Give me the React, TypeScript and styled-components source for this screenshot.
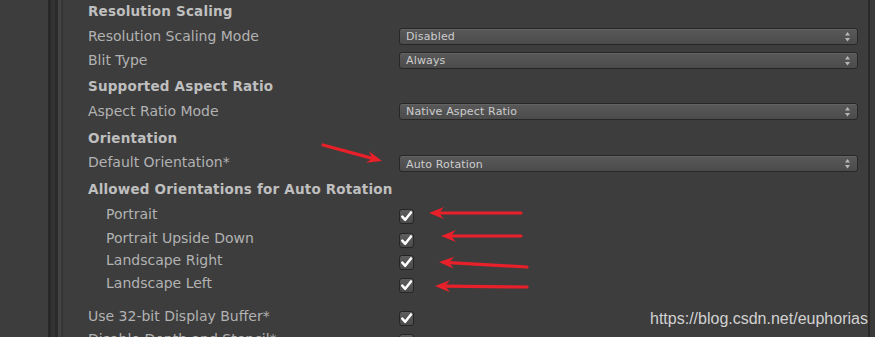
import React from 'react';
import styled, { createGlobalStyle } from 'styled-components';

const Global = createGlobalStyle`
  html, body { margin: 0; padding: 0; background: #3d3d3d; }
  body { width: 875px; height: 337px; overflow: hidden; font-family: "DejaVu Sans", "Liberation Sans", sans-serif; }
`;

const Frame = styled.div`
  position: relative;
  display: flex;
  width: 875px;
  height: 337px;
  overflow: hidden;
  background: #3d3d3d;
`;

const Gutter = styled.div`
  width: 63px;
  flex: none;
  background: linear-gradient(
    to right,
    #3d3d3d 0 48px,
    #282828 48px 51px,
    #323232 51px 55px,
    #2b2b2b 55px 58px,
    #444444 58px 61px,
    #363636 61px 63px
  );
`;

const Panel = styled.div`
  flex: 1;
  display: flex;
  flex-direction: column;
  padding-left: 25px;
`;

const Divider = styled.div`
  width: 2px;
  flex: none;
  background: #2a2a2a;
`;

const RightEdge = styled.div`
  width: 5px;
  flex: none;
  background: #3a3a3a;
`;

const Row = styled.div<{ $mt: number }>`
  display: grid;
  grid-template-columns: 311px 459px;
  align-items: center;
  height: 22px;
  flex: none;
  margin-top: ${(p) => p.$mt}px;
`;

const Header = styled.div`
  grid-column: 1 / -1;
  font-size: 13.5px;
  letter-spacing: 0.2px;
  font-weight: bold;
  color: #bfbfbf;
  white-space: nowrap;
`;

const Label = styled.div<{ $indent?: boolean }>`
  font-size: 14px;
  color: #b2b2b2;
  white-space: nowrap;
  padding-left: ${(p) => (p.$indent ? 18 : 0)}px;
`;

const Select = styled.div<{ $shift?: number }>`
  height: 17px;
  box-sizing: border-box;
  border: 1px solid #272727;
  border-radius: 3px;
  background: linear-gradient(#595959, #4b4b4b);
  box-shadow: inset 0 1px 0 rgba(255, 255, 255, 0.07);
  display: flex;
  align-items: center;
  justify-content: space-between;
  padding: 1px 7px 0 6px;
  font-size: 11px;
  letter-spacing: 0.15px;
  color: #cdcdcd;
  margin-top: ${(p) => p.$shift ?? 0}px;
`;

const Check = styled.div`
  width: 15px;
  height: 15px;
  box-sizing: border-box;
  border: 1px solid #262626;
  border-radius: 3px;
  background: linear-gradient(#5e5e5e, #4b4b4b);
  margin-top: 5px;
  display: flex;
  align-items: center;
  justify-content: center;
`;

const Overlay = styled.svg`
  position: absolute;
  left: 0;
  top: 0;
  pointer-events: none;
`;

const Watermark = styled.div`
  position: absolute;
  left: 650px;
  top: 310px;
  font-family: "Liberation Sans", Arial, sans-serif;
  font-size: 16px;
  color: #d2d2d2;
  white-space: nowrap;
`;

const Arrows = () => (
  <svg width="5" height="10" viewBox="0 0 5 10">
    <polygon points="2.5,0 5,3.5 0,3.5" fill="#b8b8b8" />
    <polygon points="0,6 5,6 2.5,9.5" fill="#b8b8b8" />
  </svg>
);

const Tick = () => (
  <svg width="13" height="13" viewBox="0 0 13 13">
    <path d="M2.3 6.6 L5.2 9.8 L11 2.4" stroke="#ffffff" strokeWidth="2.5" fill="none" strokeLinecap="round" strokeLinejoin="round" />
  </svg>
);

const Dropdown: React.FC<{ value: string; shift?: number }> = ({ value, shift }) => (
  <Select $shift={shift}>
    <span>{value}</span>
    <Arrows />
  </Select>
);

type ArrowDef = { x1: number; y1: number; x2: number; y2: number };

const RedArrow: React.FC<ArrowDef> = ({ x1, y1, x2, y2 }) => {
  const ang = Math.atan2(y2 - y1, x2 - x1);
  const len = 15;
  const half = 6;
  const bx = x2 - Math.cos(ang) * len;
  const by = y2 - Math.sin(ang) * len;
  const nx = -Math.sin(ang);
  const ny = Math.cos(ang);
  const notchX = x2 - Math.cos(ang) * (len - 5);
  const notchY = y2 - Math.sin(ang) * (len - 5);
  const pts = [
    `${x2},${y2}`,
    `${bx + nx * half},${by + ny * half}`,
    `${notchX},${notchY}`,
    `${bx - nx * half},${by - ny * half}`,
  ].join(' ');
  return (
    <g>
      <line x1={x1} y1={y1} x2={notchX} y2={notchY} stroke="#e8202a" strokeWidth="3.2" strokeLinecap="round" />
      <polygon points={pts} fill="#e8202a" />
    </g>
  );
};

const arrows: ArrowDef[] = [
  { x1: 323, y1: 145, x2: 382, y2: 161 },
  { x1: 521, y1: 213, x2: 429, y2: 213 },
  { x1: 521, y1: 236, x2: 441, y2: 236 },
  { x1: 527, y1: 267, x2: 439, y2: 262 },
  { x1: 527, y1: 287, x2: 435, y2: 286 },
];

export default function App() {
  return (
    <>
      <Global />
      <Frame>
        <Gutter />
        <Panel>
          <Row $mt={0}>
            <Header>Resolution Scaling</Header>
          </Row>
          <Row $mt={3}>
            <Label>Resolution Scaling Mode</Label>
            <Dropdown value="Disabled" />
          </Row>
          <Row $mt={2}>
            <Label>Blit Type</Label>
            <Dropdown value="Always" />
          </Row>
          <Row $mt={4}>
            <Header>Supported Aspect Ratio</Header>
          </Row>
          <Row $mt={3}>
            <Label>Aspect Ratio Mode</Label>
            <Dropdown value="Native Aspect Ratio" />
          </Row>
          <Row $mt={5}>
            <Header>Orientation</Header>
          </Row>
          <Row $mt={2}>
            <Label>Default Orientation*</Label>
            <Dropdown value="Auto Rotation" shift={3} />
          </Row>
          <Row $mt={5}>
            <Header>Allowed Orientations for Auto Rotation</Header>
          </Row>
          <Row $mt={3}>
            <Label $indent>Portrait</Label>
            <Check><Tick /></Check>
          </Row>
          <Row $mt={2}>
            <Label $indent>Portrait Upside Down</Label>
            <Check><Tick /></Check>
          </Row>
          <Row $mt={0}>
            <Label $indent>Landscape Right</Label>
            <Check><Tick /></Check>
          </Row>
          <Row $mt={1}>
            <Label $indent>Landscape Left</Label>
            <Check><Tick /></Check>
          </Row>
          <Row $mt={11}>
            <Label>Use 32-bit Display Buffer*</Label>
            <Check><Tick /></Check>
          </Row>
          <Row $mt={1}>
            <Label>Disable Depth and Stencil*</Label>
            <Check />
          </Row>
        </Panel>
        <Divider />
        <RightEdge />
        <Overlay width="875" height="337" viewBox="0 0 875 337">
          {arrows.map((a, i) => (
            <RedArrow key={i} {...a} />
          ))}
        </Overlay>
        <Watermark>https://blog.csdn.net/euphorias</Watermark>
      </Frame>
    </>
  );
}
